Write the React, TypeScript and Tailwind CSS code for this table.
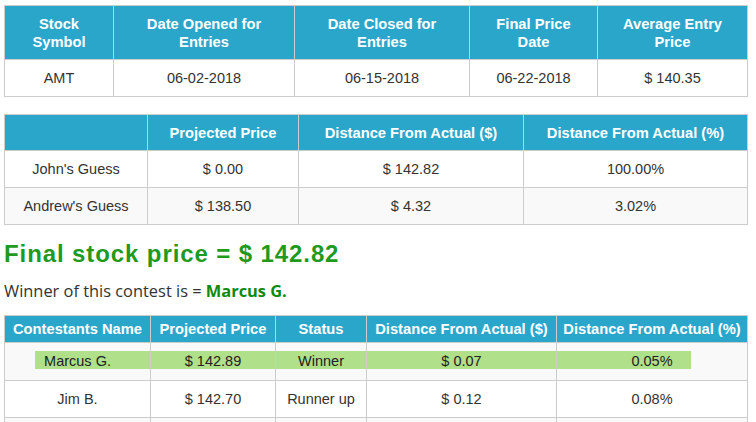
import React from 'react';

const th = 'border border-[#cccccc] text-white font-bold text-[14.7px] leading-[18px] text-center px-1 whitespace-nowrap';
const td = 'border border-[#cccccc] text-[#333333] text-[14.5px] leading-[18px] text-center px-2';

const contestInfo = {
  symbol: 'AMT',
  opened: '06-02-2018',
  closed: '06-15-2018',
  finalDate: '06-22-2018',
  avgEntry: '$ 140.35',
};

const guesses = [
  { name: "John's Guess", price: '$ 0.00', diff: '$ 142.82', pct: '100.00%' },
  { name: "Andrew's Guess", price: '$ 138.50', diff: '$ 4.32', pct: '3.02%' },
];

const contestants = [
  { name: 'Marcus G.', price: '$ 142.89', status: 'Winner', diff: '$ 0.07', pct: '0.05%' },
  { name: 'Jim B.', price: '$ 142.70', status: 'Runner up', diff: '$ 0.12', pct: '0.08%' },
];

export default function App() {
  return (
    <div className="w-[756px] h-[422px] overflow-hidden bg-white pt-[5px] px-[4px]" style={{ fontFamily: '"Liberation Sans", Arial, sans-serif' }}>
      {/* Contest details */}
      <table className="w-[744px] border-collapse table-fixed">
        <colgroup>
          <col className="w-[109px]" />
          <col className="w-[181px]" />
          <col className="w-[175px]" />
          <col className="w-[128px]" />
          <col />
        </colgroup>
        <thead>
          <tr className="bg-[#2ba6cb] h-[54px]">
            <th className={th}>Stock<br />Symbol</th>
            <th className={th}>Date Opened for<br />Entries</th>
            <th className={th}>Date Closed for<br />Entries</th>
            <th className={th}>Final Price<br />Date</th>
            <th className={th}>Average Entry<br />Price</th>
          </tr>
        </thead>
        <tbody>
          <tr className="h-[37px]">
            <td className={td}>{contestInfo.symbol}</td>
            <td className={td}>{contestInfo.opened}</td>
            <td className={td}>{contestInfo.closed}</td>
            <td className={td}>{contestInfo.finalDate}</td>
            <td className={td}>{contestInfo.avgEntry}</td>
          </tr>
        </tbody>
      </table>

      {/* Family guesses */}
      <table className="w-[744px] border-collapse table-fixed mt-[17px]">
        <colgroup>
          <col className="w-[143px]" />
          <col className="w-[151px]" />
          <col className="w-[225px]" />
          <col />
        </colgroup>
        <thead>
          <tr className="bg-[#2ba6cb] h-[36px]">
            <th className={th}></th>
            <th className={th}>Projected Price</th>
            <th className={th}>Distance From Actual ($)</th>
            <th className={th}>Distance From Actual (%)</th>
          </tr>
        </thead>
        <tbody>
          {guesses.map((g, i) => (
            <tr key={g.name} className={`h-[37px] ${i % 2 === 1 ? 'bg-[#f9f9f9]' : 'bg-white'}`}>
              <td className={td}>{g.name}</td>
              <td className={td}>{g.price}</td>
              <td className={td}>{g.diff}</td>
              <td className={td}>{g.pct}</td>
            </tr>
          ))}
        </tbody>
      </table>

      {/* Result */}
      <h2 className="text-[#1f9a1f] font-bold text-[24px] leading-[26px] tracking-[0.9px] mt-[16px]">
        Final stock price = $ 142.82
      </h2>
      <p className="text-[#333333] text-[16.4px] leading-[22px] mt-[13px]" style={{ fontFamily: '"Open Sans", sans-serif' }}>
        Winner of this contest is = <span className="font-bold text-[#0e8a0e]">Marcus G.</span>
      </p>

      {/* Contestants */}
      <table className="w-[744px] border-collapse table-fixed mt-[13px]">
        <colgroup>
          <col className="w-[146px]" />
          <col className="w-[125px]" />
          <col className="w-[91px]" />
          <col className="w-[190px]" />
          <col />
        </colgroup>
        <thead>
          <tr className="bg-[#2ba6cb] h-[27px]">
            <th className={th}>Contestants Name</th>
            <th className={th}>Projected Price</th>
            <th className={th}>Status</th>
            <th className={th}>Distance From Actual ($)</th>
            <th className={th}>Distance From Actual (%)</th>
          </tr>
        </thead>
        <tbody>
          {contestants.map((c, i) => {
            const win = i === 0;
            const cell = `border border-[#cccccc] text-[#333333] text-[14.5px] leading-[18px] text-center`;
            if (win) {
              const hl = 'bg-[#b0e08a] h-[18px] leading-[20px] text-[#222222]';
              return (
                <tr key={c.name} className="h-[37px] bg-[#f9f9f9]">
                  <td className={`${cell} pt-[8px] pb-[11px]`}><div className={`${hl} ml-[30px] pr-[30px]`}>{c.name}</div></td>
                  <td className={`${cell} pt-[8px] pb-[11px]`}><div className={hl}>{c.price}</div></td>
                  <td className={`${cell} pt-[8px] pb-[11px]`}><div className={hl}>{c.status}</div></td>
                  <td className={`${cell} pt-[8px] pb-[11px]`}><div className={hl}>{c.diff}</div></td>
                  <td className={`${cell} pt-[8px] pb-[11px]`}><div className={`${hl} mr-[56px] pl-[56px]`}>{c.pct}</div></td>
                </tr>
              );
            }
            return (
              <tr key={c.name} className="h-[37px] bg-white">
                <td className={`${cell} px-2`}>{c.name}</td>
                <td className={`${cell} px-2`}>{c.price}</td>
                <td className={`${cell} px-2`}>{c.status}</td>
                <td className={`${cell} px-2`}>{c.diff}</td>
                <td className={`${cell} px-2`}>{c.pct}</td>
              </tr>
            );
          })}
          <tr className="h-[37px] bg-[#f9f9f9]">
            <td className={td}></td>
            <td className={td}></td>
            <td className={td}></td>
            <td className={td}></td>
            <td className={td}></td>
          </tr>
        </tbody>
      </table>
    </div>
  );
}
